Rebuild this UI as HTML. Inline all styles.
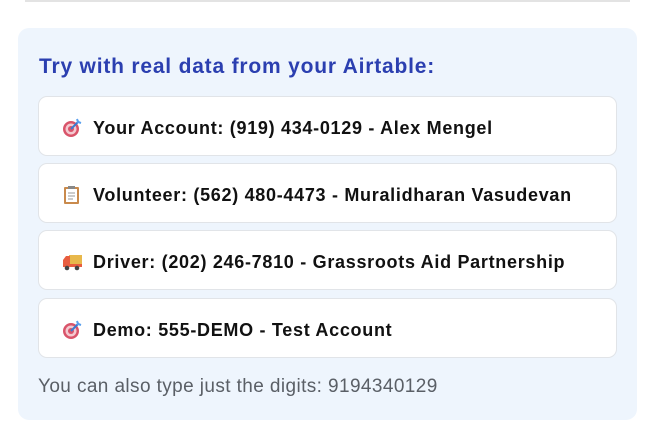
<!DOCTYPE html>
<html><head><meta charset="utf-8"><style>
*{margin:0;padding:0;box-sizing:border-box}
body{width:648px;height:442px;background:#fff;font-family:"Liberation Sans",sans-serif;position:relative;overflow:hidden}
.topline{position:absolute;left:25px;top:0;width:605px;height:2px;background:#e3e3e3}
.panel{position:absolute;left:18px;top:28px;width:619px;height:392px;background:#eef5fd;border-radius:11px}
h2{position:absolute;left:21px;top:27px;font-size:21px;font-weight:bold;color:#2b3fb0;letter-spacing:0.8px;white-space:nowrap}
.card{position:absolute;left:20px;width:579px;height:60px;background:#fff;border:1px solid #e1e4e8;border-radius:9px}
.card span{position:absolute;left:54px;top:21px;font-size:18px;font-weight:bold;color:#111;letter-spacing:0.7px;white-space:nowrap}
.card svg{position:absolute;left:23px;top:21px}
.foot{position:absolute;left:20px;top:348px;font-size:19px;color:#5a5f66;letter-spacing:0.4px;white-space:nowrap}
</style></head><body>
<div class="topline"></div>
<div class="panel">
<h2>Try with real data from your Airtable:</h2>
<div class="card" style="top:68px"><svg width="20" height="20" viewBox="0 0 20 20"><circle cx="9" cy="11" r="8" fill="#d9546a"/><circle cx="9" cy="11" r="5.5" fill="#f4c9d0"/><circle cx="9" cy="11" r="3" fill="#d9546a"/><path d="M9 11L17 3" stroke="#3b7bd1" stroke-width="2"/><path d="M15 1l1 3 3 1" stroke="#5aa0ee" stroke-width="2" fill="none"/></svg><span>Your Account: (919) 434-0129 - Alex Mengel</span></div>
<div class="card" style="top:135px"><svg width="20" height="20" viewBox="0 0 20 20"><rect x="2" y="2" width="15" height="17" rx="1" fill="#c98a4c"/><rect x="4" y="4" width="11" height="13" fill="#fff"/><rect x="6" y="1" width="7" height="3" fill="#888"/><path d="M6 8h7M6 11h7M6 14h5" stroke="#999" stroke-width="1"/></svg><span>Volunteer: (562) 480-4473 - Muralidharan Vasudevan</span></div>
<div class="card" style="top:202px"><svg width="22" height="20" viewBox="0 0 22 20"><rect x="7" y="3" width="13" height="10" fill="#e8b84b"/><path d="M1 8l3-4h4v9H1z" fill="#e85d3f"/><rect x="1" y="12" width="19" height="3" fill="#e85d3f"/><circle cx="5" cy="16" r="2.3" fill="#444"/><circle cx="15" cy="16" r="2.3" fill="#444"/></svg><span>Driver: (202) 246-7810 - Grassroots Aid Partnership</span></div>
<div class="card" style="top:270px"><svg width="20" height="20" viewBox="0 0 20 20"><circle cx="9" cy="11" r="8" fill="#d9546a"/><circle cx="9" cy="11" r="5.5" fill="#f4c9d0"/><circle cx="9" cy="11" r="3" fill="#d9546a"/><path d="M9 11L17 3" stroke="#3b7bd1" stroke-width="2"/><path d="M15 1l1 3 3 1" stroke="#5aa0ee" stroke-width="2" fill="none"/></svg><span>Demo: 555-DEMO - Test Account</span></div>
<div class="foot">You can also type just the digits: 9194340129</div>
</div>
</body></html>
